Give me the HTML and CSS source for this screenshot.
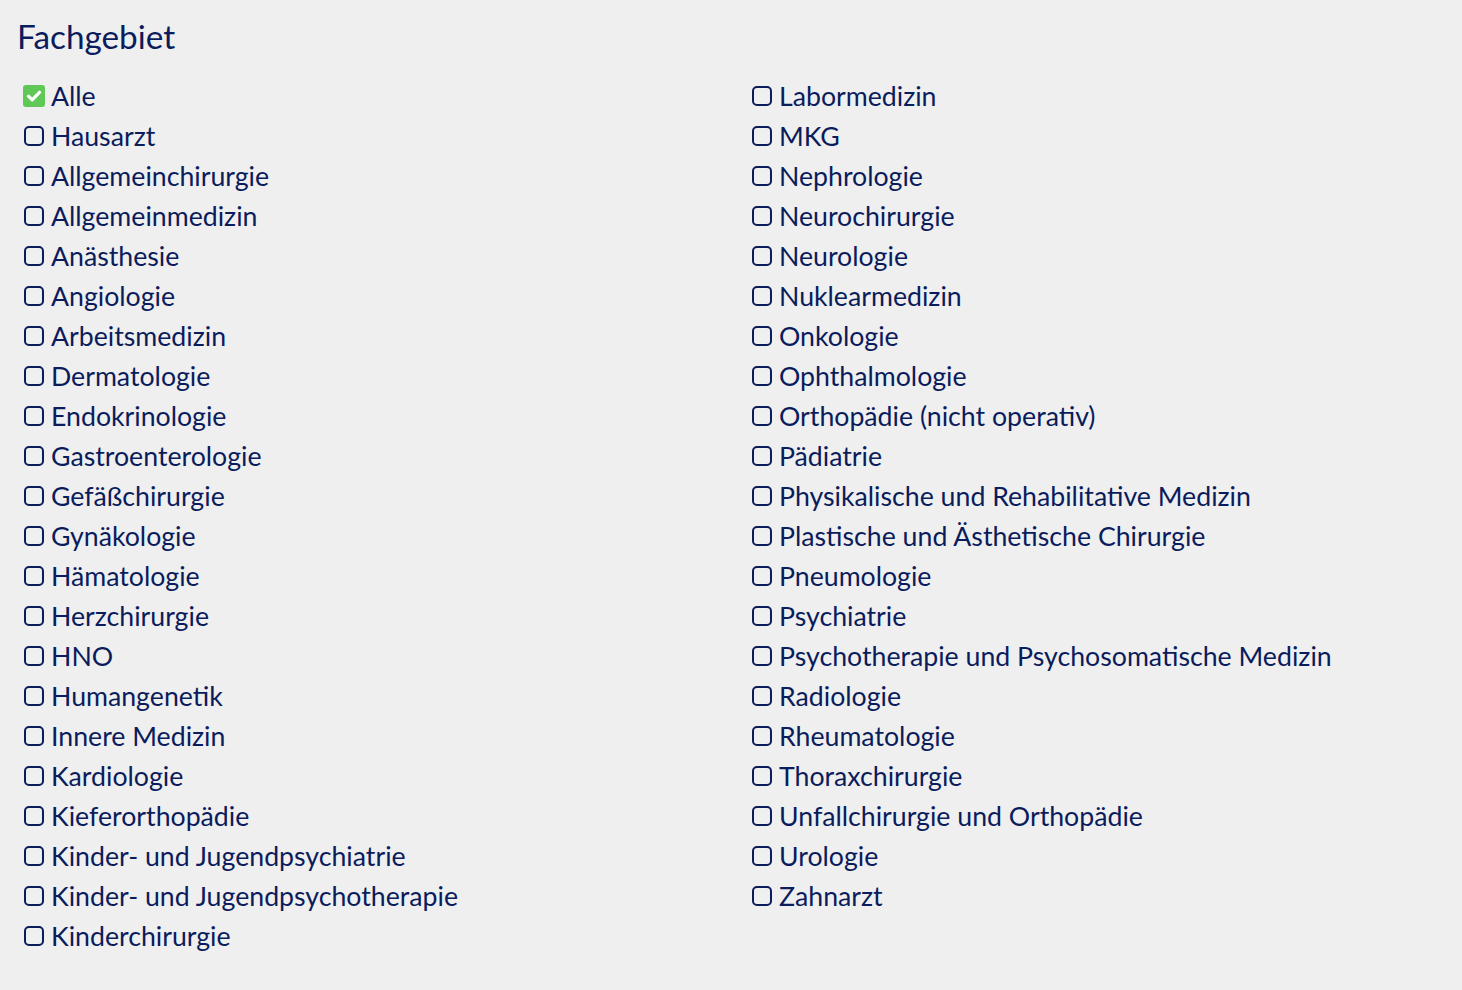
FILE: index.html
```html
<!DOCTYPE html>
<html lang="de">
<head>
<meta charset="utf-8">
<title>Fachgebiet</title>
<link rel="stylesheet" href="styles.css">
</head>
<body>
<section class="filter">
  <h2 class="filter-title">Fachgebiet</h2>
  <div class="options">
    <div class="col">
      <label class="opt checked"><span class="box"><svg viewBox="0 0 22 22" width="22" height="22"><rect x="0" y="0" width="22" height="22" rx="3" fill="#5fc857"/><path d="M5.5 11.2 L9.2 14.8 L16.5 7.3" fill="none" stroke="#fff" stroke-width="3.2" stroke-linecap="round" stroke-linejoin="round"/></svg></span><span class="txt">Alle</span></label>
      <label class="opt"><span class="box empty"></span><span class="txt">Hausarzt</span></label>
      <label class="opt"><span class="box empty"></span><span class="txt">Allgemeinchirurgie</span></label>
      <label class="opt"><span class="box empty"></span><span class="txt">Allgemeinmedizin</span></label>
      <label class="opt"><span class="box empty"></span><span class="txt">Anästhesie</span></label>
      <label class="opt"><span class="box empty"></span><span class="txt">Angiologie</span></label>
      <label class="opt"><span class="box empty"></span><span class="txt">Arbeitsmedizin</span></label>
      <label class="opt"><span class="box empty"></span><span class="txt">Dermatologie</span></label>
      <label class="opt"><span class="box empty"></span><span class="txt">Endokrinologie</span></label>
      <label class="opt"><span class="box empty"></span><span class="txt">Gastroenterologie</span></label>
      <label class="opt"><span class="box empty"></span><span class="txt">Gefäßchirurgie</span></label>
      <label class="opt"><span class="box empty"></span><span class="txt">Gynäkologie</span></label>
      <label class="opt"><span class="box empty"></span><span class="txt">Hämatologie</span></label>
      <label class="opt"><span class="box empty"></span><span class="txt">Herzchirurgie</span></label>
      <label class="opt"><span class="box empty"></span><span class="txt">HNO</span></label>
      <label class="opt"><span class="box empty"></span><span class="txt">Humangenetik</span></label>
      <label class="opt"><span class="box empty"></span><span class="txt">Innere Medizin</span></label>
      <label class="opt"><span class="box empty"></span><span class="txt">Kardiologie</span></label>
      <label class="opt"><span class="box empty"></span><span class="txt">Kieferorthopädie</span></label>
      <label class="opt"><span class="box empty"></span><span class="txt">Kinder- und Jugendpsychiatrie</span></label>
      <label class="opt"><span class="box empty"></span><span class="txt">Kinder- und Jugendpsychotherapie</span></label>
      <label class="opt"><span class="box empty"></span><span class="txt">Kinderchirurgie</span></label>
    </div>
    <div class="col">
      <label class="opt"><span class="box empty"></span><span class="txt">Labormedizin</span></label>
      <label class="opt"><span class="box empty"></span><span class="txt">MKG</span></label>
      <label class="opt"><span class="box empty"></span><span class="txt">Nephrologie</span></label>
      <label class="opt"><span class="box empty"></span><span class="txt">Neurochirurgie</span></label>
      <label class="opt"><span class="box empty"></span><span class="txt">Neurologie</span></label>
      <label class="opt"><span class="box empty"></span><span class="txt">Nuklearmedizin</span></label>
      <label class="opt"><span class="box empty"></span><span class="txt">Onkologie</span></label>
      <label class="opt"><span class="box empty"></span><span class="txt">Ophthalmologie</span></label>
      <label class="opt"><span class="box empty"></span><span class="txt">Orthopädie (nicht operativ)</span></label>
      <label class="opt"><span class="box empty"></span><span class="txt">Pädiatrie</span></label>
      <label class="opt"><span class="box empty"></span><span class="txt">Physikalische und Rehabilitative Medizin</span></label>
      <label class="opt"><span class="box empty"></span><span class="txt">Plastische und Ästhetische Chirurgie</span></label>
      <label class="opt"><span class="box empty"></span><span class="txt">Pneumologie</span></label>
      <label class="opt"><span class="box empty"></span><span class="txt">Psychiatrie</span></label>
      <label class="opt"><span class="box empty"></span><span class="txt">Psychotherapie und Psychosomatische Medizin</span></label>
      <label class="opt"><span class="box empty"></span><span class="txt">Radiologie</span></label>
      <label class="opt"><span class="box empty"></span><span class="txt">Rheumatologie</span></label>
      <label class="opt"><span class="box empty"></span><span class="txt">Thoraxchirurgie</span></label>
      <label class="opt"><span class="box empty"></span><span class="txt">Unfallchirurgie und Orthopädie</span></label>
      <label class="opt"><span class="box empty"></span><span class="txt">Urologie</span></label>
      <label class="opt"><span class="box empty"></span><span class="txt">Zahnarzt</span></label>
    </div>
  </div>
</section>
</body>
</html>
```

FILE: styles.css
```css
html, body {
  margin: 0;
  padding: 0;
  background: #efefef;
}
body {
  font-family: Lato, "Open Sans", "Liberation Sans", sans-serif;
  color: #0b1c5c;
  width: 1462px;
  height: 990px;
  overflow: hidden;
}
.filter {
  padding: 17px 0 0 17px;
}
.filter-title {
  margin: 0;
  font-size: 33.3px;
  font-weight: 400;
  line-height: 38px;
  color: #0b1c5c;
}
.options {
  display: grid;
  grid-template-columns: 728px 1fr;
  margin-top: 21px;
  padding-left: 6px;
}
.col {
  display: flex;
  flex-direction: column;
}
.opt {
  display: flex;
  align-items: center;
  height: 40px;
  font-size: 26.7px;
}
.box {
  width: 22px;
  height: 22px;
  flex: none;
  box-sizing: border-box;
  margin-right: 6px;
  display: block;
}
.box svg {
  display: block;
}
.box.empty {
  border: 2px solid #0b1c5c;
  border-radius: 5px;
  width: 20px;
  height: 20px;
  margin-left: 1px;
  margin-right: 7px;
}
.txt {
  line-height: 40px;
}
```
